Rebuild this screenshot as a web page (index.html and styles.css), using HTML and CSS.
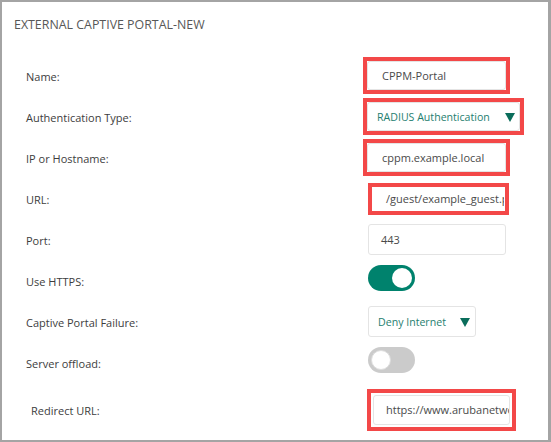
FILE: index.html
```html
<!DOCTYPE html>
<html lang="en">
<head>
<meta charset="utf-8">
<title>External Captive Portal - New</title>
<link rel="stylesheet" href="styles.css">
</head>
<body>
<div class="frame">
  <h1 class="title">EXTERNAL CAPTIVE PORTAL-NEW</h1>
  <div class="form">
    <div class="row">
      <span class="label">Name:</span>
      <span class="mark mark-left"><span class="field field-name">CPPM-Portal</span></span>
    </div>
    <div class="row">
      <span class="label">Authentication Type:</span>
      <span class="mark mark-left"><span class="select select-auth"><span class="select-text">RADIUS Authentication</span><span class="arrow"></span></span></span>
    </div>
    <div class="row">
      <span class="label">IP or Hostname:</span>
      <span class="mark mark-left"><span class="field field-name">cppm.example.local</span></span>
    </div>
    <div class="row">
      <span class="label">URL:</span>
      <span class="mark"><span class="field field-url">/guest/example_guest.php</span></span>
    </div>
    <div class="row">
      <span class="label">Port:</span>
      <span class="field field-port">443</span>
    </div>
    <div class="row">
      <span class="label">Use HTTPS:</span>
      <span class="toggle toggle-on"><span class="knob"></span></span>
    </div>
    <div class="row">
      <span class="label">Captive Portal Failure:</span>
      <span class="select select-fail"><span class="select-text">Deny Internet</span><span class="arrow"></span></span>
    </div>
    <div class="row">
      <span class="label">Server offload:</span>
      <span class="toggle toggle-off"><span class="knob"></span></span>
    </div>
    <div class="row row-redirect">
      <span class="label label-redirect">Redirect URL:</span>
      <span class="mark mark-pad"><span class="field field-redirect">https://www.arubanetworks.com</span></span>
    </div>
  </div>
</div>
</body>
</html>
```
FILE: styles.css
```css
html, body {
  margin: 0;
  padding: 0;
  background: #ffffff;
}

.frame {
  box-sizing: border-box;
  width: 551px;
  height: 442px;
  border: 2px solid #a4a4a4;
  border-right-width: 3px;
  background: #ffffff;
  font-family: "Open Sans", "Liberation Sans", sans-serif;
  overflow: hidden;
}

.title {
  margin: 0;
  padding: 13px 0 0 12px;
  font-size: 12.4px;
  line-height: 20px;
  font-weight: 400;
  color: #575757;
  letter-spacing: 0;
}

.form {
  display: flex;
  flex-direction: column;
  margin-top: 20px;
}

.row {
  display: flex;
  align-items: center;
  height: 41px;
  padding-left: 24px;
}

.row-redirect {
  height: 42px;
  margin-top: 6px;
}

.label {
  flex: 0 0 auto;
  width: 342px;
  font-size: 11px;
  line-height: 16px;
  color: #3d3d3d;
  padding-top: 2px;
}

.label-redirect {
  width: 336px;
  padding-left: 5px;
}

.mark {
  display: flex;
  border: 4px solid #f34848;
}

.mark-left {
  margin-left: -5px;
}

.mark-pad {
  padding: 2px;
}

.field {
  box-sizing: border-box;
  display: block;
  height: 29px;
  width: 139px;
  border: 1px solid #e4e4e4;
  border-radius: 3px;
  font-size: 11px;
  line-height: 27px;
  color: #4a4a4a;
  white-space: nowrap;
  overflow: hidden;
  padding-left: 14px;
  background: #ffffff;
}

.field-url {
  width: 133px;
  height: 24px;
  line-height: 22px;
  border-color: #ffffff;
  padding-left: 13px;
}

.field-port {
  width: 138px;
  height: 31px;
  line-height: 29px;
  padding-left: 12px;
}

.field-redirect {
  width: 137px;
  height: 30px;
  line-height: 28px;
  padding-left: 12px;
}

.select {
  box-sizing: border-box;
  display: flex;
  align-items: center;
  justify-content: space-between;
  border: 1px solid #e4e4e4;
  border-radius: 3px;
  background: #ffffff;
  padding: 0 4px 0 9px;
}

.select-auth {
  width: 153px;
  height: 29px;
}

.select-fail {
  width: 108px;
  height: 31px;
  padding-right: 5px;
}

.select-text {
  font-size: 10.6px;
  line-height: 16px;
  color: #1f8070;
  white-space: nowrap;
}

.arrow {
  width: 0;
  height: 0;
  border-left: 5px solid transparent;
  border-right: 5px solid transparent;
  border-top: 9px solid #0a6d5b;
  margin-top: 1px;
}

.toggle {
  box-sizing: border-box;
  display: flex;
  align-items: center;
  width: 47px;
  height: 26px;
  border-radius: 13px;
  padding: 0 3px;
  margin-top: -5px;
}

.toggle-on {
  background: #00826d;
  justify-content: flex-end;
}

.toggle-off {
  background: #cbcbcb;
  justify-content: flex-start;
}

.knob {
  box-sizing: border-box;
  width: 20px;
  height: 20px;
  border-radius: 50%;
  background: #ffffff;
}

.toggle-off .knob {
  border: 1px solid #dddddd;
}
```
